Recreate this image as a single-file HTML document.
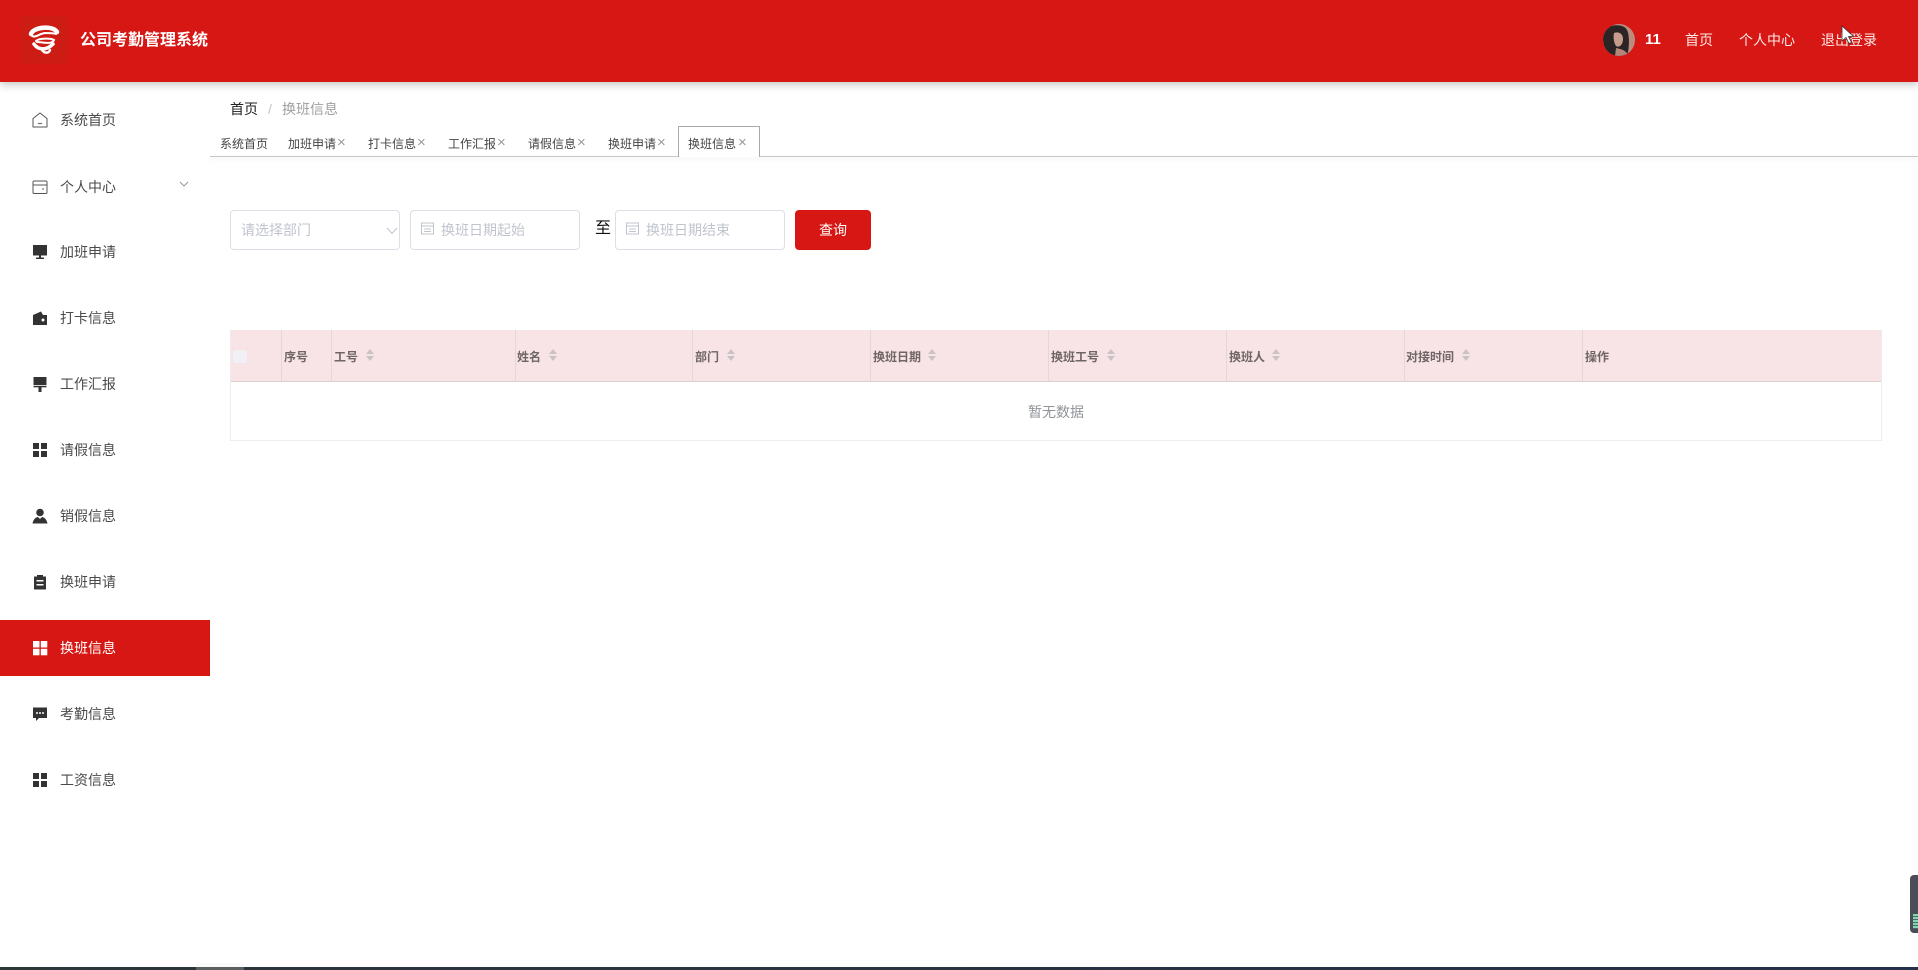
<!DOCTYPE html>
<html lang="zh-CN"><head><meta charset="utf-8"><title>公司考勤管理系统</title>
<style>
html,body{margin:0;padding:0;width:1918px;height:970px;overflow:hidden;background:#fff;font-family:"Liberation Sans","Noto Sans CJK SC",sans-serif;}
.a{position:absolute;white-space:nowrap;}
.t{position:absolute;white-space:nowrap;line-height:20px;height:20px;}
#hdr{position:absolute;left:0;top:0;width:1918px;height:82px;background:#d71713;box-shadow:0 3px 8px rgba(0,0,0,.22);}
.h{color:#fbe9e8;font-size:14px;top:30px;}
.m{left:60px;font-size:14px;color:#4a4a4a;}
.ic{position:absolute;left:32px;width:16px;height:16px;}
.tab{font-size:12px;color:#444;top:134px;}
.x{font-size:15px;color:#999;top:133px;}
.box{position:absolute;top:210px;height:38px;border:1px solid #dcdfe6;border-radius:4px;background:#fff;}
.ph{font-size:14px;color:#c0c4cc;top:220px;}
.th{font-size:12px;font-weight:700;color:#6f6566;top:347px;}
.dv{position:absolute;top:330px;width:1px;height:51px;background:#e6d6d8;}
.sort{position:absolute;top:348px;width:10px;height:14px;}
</style></head><body>

<div id="hdr"></div>
<div class="a" style="left:20px;top:16px;width:48px;height:48px;background:#cc1c14;border-radius:6px;"></div>
<svg class="a" style="left:28px;top:24px" width="32" height="32" viewBox="0 0 32 32" fill="none" stroke="#fff" stroke-linecap="round"><path d="M3 10C5 3 25 1 29 8" stroke-width="4.500"/><path d="M3 11C7 15 10 10 17 9C22 9 26 9 28 10" stroke-width="2"/><path d="M8 17C11 14 23 14 26 16C24 21 14 18 9 18" stroke-width="2"/><path d="M6 20C10 26 18 27 25 20" stroke-width="3.500"/><path d="M14 26C17 30 21 29 22 26" stroke-width="2.500"/></svg>
<div class="t" style="left:80px;top:31px;font-size:16px;font-weight:700;color:#fff;">公司考勤管理系统</div>

<svg class="a" style="left:1603px;top:24px" width="32" height="32" viewBox="0 0 32 32"><defs><clipPath id="c"><circle cx="16" cy="16" r="16"/></clipPath></defs><g clip-path="url(#c)"><rect width="32" height="32" fill="#b98c7e"/><path d="M0 8C2 1 20-2 24 6C27 12 26 26 24 32H4C1 24-1 16 0 8Z" fill="#2a2424"/><path d="M11 9C16 7 20 10 20 15C20 21 16 24 13 22C11 19 10 14 11 9Z" fill="#c79c8d"/><path d="M13 24C18 25 23 26 26 32H12Z" fill="#b48578"/></g></svg>
<div class="t" style="left:1645px;top:30px;font-size:15px;font-weight:700;color:#fff;">11</div>
<div class="t h" style="left:1685px;">首页</div>
<div class="t h" style="left:1739px;">个人中心</div>
<div class="t h" style="left:1821px;">退出登录</div>
<svg class="a" style="left:1841px;top:25px;z-index:5" width="14" height="20" viewBox="0 0 14 20"><path d="M1 1V16L5 12.500L8 18.500L10.500 17.500L7.500 11.500H12.500Z" fill="#fff" stroke="#333" stroke-width=".8"/></svg>

<!-- sidebar -->
<div class="a" style="left:0;top:620px;width:210px;height:56px;background:#d71713;"></div>

<svg class="ic" style="top:112px" viewBox="0 0 16 16" fill="none" stroke="#555" stroke-width="1"><path d="M1 6.500L8 1L15 6.500V15H1Z" stroke-linejoin="round"/><path d="M6 11Q8 12.500 10 11"/></svg>
<div class="t m" style="top:110px;">系统首页</div>

<svg class="ic" style="top:179px" viewBox="0 0 16 16" fill="none" stroke="#555" stroke-width="1"><rect x="1" y="2" width="14" height="12.500" rx="1"/><path d="M1 6H15M10 10H12"/></svg>
<div class="t m" style="top:177px;">个人中心</div>
<svg class="a" style="left:179px;top:181px" width="10" height="7" viewBox="0 0 10 7" fill="none" stroke="#999"><path d="M1 1L5 5L9 1"/></svg>

<svg class="ic" style="top:244px" viewBox="0 0 16 16" fill="#333"><rect x="1" y="1" width="14" height="10.500"/><rect x="7" y="11.500" width="2" height="2"/><rect x="4" y="13.500" width="8" height="1.500"/></svg>
<div class="t m" style="top:242px;">加班申请</div>

<svg class="ic" style="top:310px" viewBox="0 0 16 16" fill="#333"><path d="M1 5L9 1.500L11 5H15V15H1Z"/><circle cx="11" cy="10" r="1.500" fill="#fff"/></svg>
<div class="t m" style="top:308px;">打卡信息</div>

<svg class="ic" style="top:376px" viewBox="0 0 16 16" fill="#333"><rect x="1.500" y="1" width="13" height="8"/><rect x="1.500" y="9.800" width="13" height="1.500"/><rect x="6.500" y="11" width="3" height="5"/></svg>
<div class="t m" style="top:374px;">工作汇报</div>

<svg class="ic" style="top:442px" viewBox="0 0 16 16" fill="#333"><rect x="1" y="1" width="6" height="6"/><rect x="9" y="1" width="6" height="6"/><rect x="1" y="9" width="6" height="6"/><rect x="9" y="9" width="6" height="6"/></svg>
<div class="t m" style="top:440px;">请假信息</div>

<svg class="ic" style="top:508px" viewBox="0 0 16 16" fill="#333"><circle cx="8" cy="4.500" r="3.800"/><path d="M0.500 15.500C1.500 10.500 4.500 9 6 9L8 11L10 9C11.500 9 14.500 10.500 15.500 15.500Z"/></svg>
<div class="t m" style="top:506px;">销假信息</div>

<svg class="ic" style="top:574px" viewBox="0 0 16 16" fill="#333"><path d="M2 2.500H5V1H11V2.500H14V15.500H2Z"/><rect x="4.500" y="6" width="7" height="1.500" fill="#fff"/><rect x="4.500" y="10" width="7" height="1.500" fill="#fff"/></svg>
<div class="t m" style="top:572px;">换班申请</div>

<svg class="ic" style="top:640px" viewBox="0 0 16 16" fill="#fff"><rect x="1" y="1" width="6.500" height="6.500"/><rect x="8.800" y="1" width="6.500" height="6.500"/><rect x="1" y="8.800" width="6.500" height="6.500"/><rect x="8.800" y="8.800" width="6.500" height="6.500"/></svg>
<div class="t m" style="top:638px;color:#fff;">换班信息</div>

<svg class="ic" style="top:706px" viewBox="0 0 16 16" fill="#333"><path d="M1 1.500H15V12H7L4 15V12H1Z"/><g fill="#fff"><circle cx="5" cy="7" r="1"/><circle cx="8" cy="7" r="1"/><circle cx="11" cy="7" r="1"/></g></svg>
<div class="t m" style="top:704px;">考勤信息</div>

<svg class="ic" style="top:772px" viewBox="0 0 16 16" fill="#333"><rect x="1" y="1" width="6" height="6"/><rect x="9" y="1" width="6" height="6"/><rect x="1" y="9" width="6" height="6"/><rect x="9" y="9" width="6" height="6"/></svg>
<div class="t m" style="top:770px;">工资信息</div>

<!-- breadcrumb -->
<div class="t" style="left:230px;top:99px;font-size:14px;color:#222;">首页</div>
<div class="t" style="left:268px;top:99px;font-size:14px;color:#c0c4cc;">/</div>
<div class="t" style="left:282px;top:99px;font-size:14px;color:#a0a0a0;">换班信息</div>

<!-- tabs -->
<div class="a" style="left:210px;top:156px;width:1708px;height:1px;background:#c9c9c9;box-shadow:0 2px 4px rgba(0,0,0,.12);"></div>
<div class="a" style="left:678px;top:126px;width:80px;height:30px;border:1px solid #a9a9a9;border-bottom:0;background:#fff;"></div>
<div class="t tab" style="left:220px;">系统首页</div>
<div class="t tab" style="left:288px;">加班申请</div><div class="t x" style="left:337px;">×</div>
<div class="t tab" style="left:368px;">打卡信息</div><div class="t x" style="left:417px;">×</div>
<div class="t tab" style="left:448px;">工作汇报</div><div class="t x" style="left:497px;">×</div>
<div class="t tab" style="left:528px;">请假信息</div><div class="t x" style="left:577px;">×</div>
<div class="t tab" style="left:608px;">换班申请</div><div class="t x" style="left:657px;">×</div>
<div class="t tab" style="left:688px;">换班信息</div><div class="t x" style="left:738px;">×</div>

<!-- filters -->
<div class="box" style="left:230px;width:168px;"></div>
<div class="t ph" style="left:241px;">请选择部门</div>
<svg class="a" style="left:386px;top:227px" width="12" height="8" viewBox="0 0 12 8" fill="none" stroke="#c0c4cc"><path d="M1 1L6 6.500L11 1"/></svg>

<div class="box" style="left:410px;width:168px;"></div>
<svg class="a" style="left:421px;top:222px" width="13" height="13" viewBox="0 0 13 13" fill="none" stroke="#c0c4cc"><rect x=".5" y="1" width="12" height="11"/><path d="M.5 4H12.500M3 7H10M3 9.500H10"/></svg>
<div class="t ph" style="left:441px;">换班日期起始</div>

<div class="t" style="left:595px;top:219px;font-size:16px;color:#111;">至</div>

<div class="box" style="left:615px;width:168px;"></div>
<svg class="a" style="left:626px;top:222px" width="13" height="13" viewBox="0 0 13 13" fill="none" stroke="#c0c4cc"><rect x=".5" y="1" width="12" height="11"/><path d="M.5 4H12.500M3 7H10M3 9.500H10"/></svg>
<div class="t ph" style="left:646px;">换班日期结束</div>

<div class="a" style="left:795px;top:210px;width:76px;height:40px;background:#d71713;border-radius:4px;color:#fff;font-size:14px;line-height:40px;text-align:center;">查询</div>

<!-- table -->
<div class="a" style="left:230px;top:330px;width:1650px;height:110px;border:1px solid #ededed;border-top:0;"></div>
<div class="a" style="left:231px;top:330px;width:1650px;height:51px;background:#f8e4e6;border-bottom:1px solid #dccfd0;"></div>
<div class="a" style="left:233px;top:350px;width:14px;height:13px;background:#f1f0f4;border-radius:2px;"></div>

<div class="dv" style="left:281px"></div>
<div class="dv" style="left:331px"></div>
<div class="dv" style="left:515px"></div>
<div class="dv" style="left:692px"></div>
<div class="dv" style="left:870px"></div>
<div class="dv" style="left:1048px"></div>
<div class="dv" style="left:1226px"></div>
<div class="dv" style="left:1404px"></div>
<div class="dv" style="left:1582px"></div>

<div class="t th" style="left:284px;">序号</div>
<div class="t th" style="left:334px;">工号</div>
<div class="t th" style="left:517px;">姓名</div>
<div class="t th" style="left:695px;">部门</div>
<div class="t th" style="left:873px;">换班日期</div>
<div class="t th" style="left:1051px;">换班工号</div>
<div class="t th" style="left:1229px;">换班人</div>
<div class="t th" style="left:1406px;">对接时间</div>
<div class="t th" style="left:1585px;">操作</div>

<svg class="sort" style="left:365px" viewBox="0 0 10 14" fill="#c9c3c6"><path d="M5 1L9 6H1ZM1 8H9L5 13Z"/></svg>
<svg class="sort" style="left:548px" viewBox="0 0 10 14" fill="#c9c3c6"><path d="M5 1L9 6H1ZM1 8H9L5 13Z"/></svg>
<svg class="sort" style="left:726px" viewBox="0 0 10 14" fill="#c9c3c6"><path d="M5 1L9 6H1ZM1 8H9L5 13Z"/></svg>
<svg class="sort" style="left:927px" viewBox="0 0 10 14" fill="#c9c3c6"><path d="M5 1L9 6H1ZM1 8H9L5 13Z"/></svg>
<svg class="sort" style="left:1106px" viewBox="0 0 10 14" fill="#c9c3c6"><path d="M5 1L9 6H1ZM1 8H9L5 13Z"/></svg>
<svg class="sort" style="left:1271px" viewBox="0 0 10 14" fill="#c9c3c6"><path d="M5 1L9 6H1ZM1 8H9L5 13Z"/></svg>
<svg class="sort" style="left:1461px" viewBox="0 0 10 14" fill="#c9c3c6"><path d="M5 1L9 6H1ZM1 8H9L5 13Z"/></svg>

<div class="t" style="left:1028px;top:402px;font-size:14px;color:#909399;">暂无数据</div>

<!-- side widget -->
<div class="a" style="left:1910px;top:875px;width:8px;height:58px;background:#4c4c58;border-radius:4px 0 0 4px;"></div>
<div class="a" style="left:1913px;top:914px;width:5px;height:15px;background:repeating-linear-gradient(180deg,#7fd8b0 0,#7fd8b0 2px,#4c6a68 2px,#4c6a68 3px);"></div>

<!-- bottom bar -->
<div class="a" style="left:0;top:967px;width:1918px;height:3px;background:linear-gradient(90deg,#2b3739,#25304a);"></div>
<div class="a" style="left:196px;top:967px;width:48px;height:3px;background:#5a6160;"></div>
<div class="a" style="left:196px;top:963px;width:48px;height:4px;background:#fafafa;"></div>

</body></html>
